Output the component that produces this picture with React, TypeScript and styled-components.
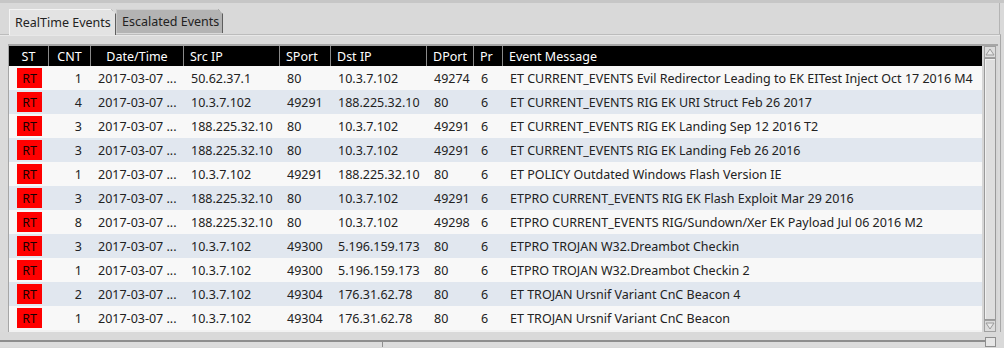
import styled, { createGlobalStyle } from 'styled-components';

const GlobalStyle = createGlobalStyle`
  html, body {
    margin: 0;
    padding: 0;
    background: #d9d9d9;
  }
  * {
    box-sizing: border-box;
  }
`;

const COLS = '40px 42px 93px 96px 51px 96px 47px 29px 1fr';

type Row = {
  cnt: number;
  src: string;
  sport: string;
  dst: string;
  dport: string;
  msg: string;
};

const rows: Row[] = [
  { cnt: 1, src: '50.62.37.1', sport: '80', dst: '10.3.7.102', dport: '49274', msg: 'ET CURRENT_EVENTS Evil Redirector Leading to EK EITest Inject Oct 17 2016 M4' },
  { cnt: 4, src: '10.3.7.102', sport: '49291', dst: '188.225.32.10', dport: '80', msg: 'ET CURRENT_EVENTS RIG EK URI Struct Feb 26 2017' },
  { cnt: 3, src: '188.225.32.10', sport: '80', dst: '10.3.7.102', dport: '49291', msg: 'ET CURRENT_EVENTS RIG EK Landing Sep 12 2016 T2' },
  { cnt: 3, src: '188.225.32.10', sport: '80', dst: '10.3.7.102', dport: '49291', msg: 'ET CURRENT_EVENTS RIG EK Landing Feb 26 2016' },
  { cnt: 1, src: '10.3.7.102', sport: '49291', dst: '188.225.32.10', dport: '80', msg: 'ET POLICY Outdated Windows Flash Version IE' },
  { cnt: 3, src: '188.225.32.10', sport: '80', dst: '10.3.7.102', dport: '49291', msg: 'ETPRO CURRENT_EVENTS RIG EK Flash Exploit Mar 29 2016' },
  { cnt: 8, src: '188.225.32.10', sport: '80', dst: '10.3.7.102', dport: '49298', msg: 'ETPRO CURRENT_EVENTS RIG/Sundown/Xer EK Payload Jul 06 2016 M2' },
  { cnt: 3, src: '10.3.7.102', sport: '49300', dst: '5.196.159.173', dport: '80', msg: 'ETPRO TROJAN W32.Dreambot Checkin' },
  { cnt: 1, src: '10.3.7.102', sport: '49300', dst: '5.196.159.173', dport: '80', msg: 'ETPRO TROJAN W32.Dreambot Checkin 2' },
  { cnt: 2, src: '10.3.7.102', sport: '49304', dst: '176.31.62.78', dport: '80', msg: 'ET TROJAN Ursnif Variant CnC Beacon 4' },
  { cnt: 1, src: '10.3.7.102', sport: '49304', dst: '176.31.62.78', dport: '80', msg: 'ET TROJAN Ursnif Variant CnC Beacon' },
];

const headers: { label: string; align: 'left' | 'center' }[] = [
  { label: 'ST', align: 'center' },
  { label: 'CNT', align: 'center' },
  { label: 'Date/Time', align: 'center' },
  { label: 'Src IP', align: 'left' },
  { label: 'SPort', align: 'left' },
  { label: 'Dst IP', align: 'left' },
  { label: 'DPort', align: 'left' },
  { label: 'Pr', align: 'left' },
  { label: 'Event Message', align: 'left' },
];

const Page = styled.div`
  width: 1004px;
  height: 348px;
  overflow: hidden;
  display: flex;
  flex-direction: column;
  background: #d9d9d9;
  border-top: 3px solid #c6c6c6;
  font-family: 'Noto Sans', 'Open Sans', sans-serif;
  font-size: 12.5px;
  color: #222;
`;

const TabRow = styled.div`
  display: flex;
  align-items: flex-end;
  height: 31px;
  padding-left: 9px;
  margin-right: 4px;
  border-right: 1px solid #b4b4b4;
`;

const Tab = styled.div<{ $active?: boolean }>`
  position: relative;
  display: flex;
  align-items: center;
  width: 107px;
  height: ${(p) => (p.$active ? '26px' : '24px')};
  margin-bottom: ${(p) => (p.$active ? '-1px' : '1px')};
  padding: 0 0 0 5px;
  background: ${(p) => (p.$active ? '#e3e3e3' : '#b3b3b3')};
  border-top: 1px solid ${(p) => (p.$active ? '#f4f4f4' : '#d0d0d0')};
  border-left: 1px solid ${(p) => (p.$active ? '#f4f4f4' : '#c8c8c8')};
  border-right: 1px solid #5e5e5e;
  clip-path: polygon(0 0, calc(100% - 5px) 0, 100% 5px, 100% 100%, 0 100%);
  color: #222;
  white-space: nowrap;

  &::after {
    content: '';
    position: absolute;
    top: -1px;
    right: -1px;
    width: 7px;
    height: 1px;
    background: #5e5e5e;
    transform-origin: right center;
    transform: translateX(-1px) rotate(45deg) translateY(2px);
  }
`;

const Panel = styled.div`
  display: flex;
  flex-direction: column;
  margin-right: 3px;
  padding: 9px 2px 0 8px;
  border-top: 1px solid #bcbcbc;
  border-right: 1px solid #a8a8a8;
  background: #dadada;
  box-shadow: inset 0 1px 0 #e8e8e8;
`;

const Frame = styled.div`
  display: flex;
  height: 288px;
  border-top: 2px solid #a6a6a6;
  border-left: 1px solid #a6a6a6;
  background: #f2f2f2;
`;

const TableArea = styled.div`
  flex: 1;
  display: flex;
  flex-direction: column;
  overflow: hidden;
`;

const GridRow = styled.div<{ $shade?: boolean }>`
  display: grid;
  grid-template-columns: ${COLS};
  height: 24px;
  background: ${(p) => (p.$shade ? '#e1e7ef' : '#f8f8f8')};
`;

const HeaderRow = styled(GridRow)`
  height: 20px;
  background: #000;
`;

const HeadCell = styled.div<{ $align: 'left' | 'center' }>`
  display: flex;
  align-items: center;
  justify-content: ${(p) => (p.$align === 'center' ? 'center' : 'flex-start')};
  padding-left: ${(p) => (p.$align === 'center' ? '0' : '6px')};
  color: #fff;
  border-right: 1px solid #8a8a8a;
  white-space: nowrap;

  &:last-child {
    border-right: none;
  }
`;

const Cell = styled.div<{ $right?: boolean }>`
  display: flex;
  align-items: center;
  justify-content: ${(p) => (p.$right ? 'flex-end' : 'flex-start')};
  padding: ${(p) => (p.$right ? '0 9px 0 0' : '0 0 0 7px')};
  white-space: nowrap;
  overflow: hidden;
`;

const StatusCell = styled.div`
  display: flex;
  align-items: center;
  padding-left: 8px;
`;

const Badge = styled.div`
  width: 25px;
  height: 20px;
  display: flex;
  align-items: center;
  justify-content: center;
  background: #ff0000;
  color: #1a0000;
`;

const Scrollbar = styled.div`
  width: 16px;
  display: flex;
  flex-direction: column;
  padding: 0 2px 0 2px;
  background: #d6d6d6;
`;

const ArrowBox = styled.div`
  height: 12px;
  display: flex;
  align-items: center;
  justify-content: center;
  background: #dcdcdc;
  border: 1px solid #a0a0a0;
`;

const Thumb = styled.div`
  flex: 1;
  border: 1px solid #9a9a9a;
  background: #dedede;
  box-shadow: inset 1px 1px 0 #f0f0f0;
`;

const BottomBar = styled.div`
  display: flex;
  align-items: flex-end;
  height: 15px;
`;

const BottomSegment = styled.div<{ $width?: number }>`
  height: 7px;
  flex: ${(p) => (p.$width ? `0 0 ${p.$width}px` : '1')};
  border-top: 2px solid #8e8e8e;
  border-right: ${(p) => (p.$width ? '1px solid #8e8e8e' : 'none')};
  background: #dcdcdc;
`;

const Grip = styled.div`
  width: 11px;
  height: 10px;
  margin: 0 8px 0 0;
  border: 1px solid #8e8e8e;
  background: #e6e6e6;
  align-self: flex-end;
`;

const Arrow = ({ up }: { up?: boolean }) => (
  <svg width="10" height="8" viewBox="0 0 10 8">
    <path
      d={up ? 'M1 7 L5 1 L9 7 Z' : 'M1 1 L5 7 L9 1 Z'}
      fill="#e8e8e8"
      stroke="#9a9a9a"
      strokeWidth="1"
    />
  </svg>
);

const App = () => {
  return (
    <>
      <GlobalStyle />
      <Page>
        <TabRow>
          <Tab $active>RealTime Events</Tab>
          <Tab>Escalated Events</Tab>
        </TabRow>
        <Panel>
          <Frame>
            <TableArea>
              <HeaderRow>
                {headers.map((h) => (
                  <HeadCell key={h.label} $align={h.align}>
                    {h.label}
                  </HeadCell>
                ))}
              </HeaderRow>
              {rows.map((r, i) => (
                <GridRow key={i} $shade={i % 2 === 1}>
                  <StatusCell>
                    <Badge>RT</Badge>
                  </StatusCell>
                  <Cell $right>{r.cnt}</Cell>
                  <Cell>2017-03-07 ...</Cell>
                  <Cell>{r.src}</Cell>
                  <Cell>{r.sport}</Cell>
                  <Cell>{r.dst}</Cell>
                  <Cell>{r.dport}</Cell>
                  <Cell>6</Cell>
                  <Cell>{r.msg}</Cell>
                </GridRow>
              ))}
            </TableArea>
            <Scrollbar>
              <ArrowBox>
                <Arrow up />
              </ArrowBox>
              <Thumb />
              <ArrowBox>
                <Arrow />
              </ArrowBox>
            </Scrollbar>
          </Frame>
        </Panel>
        <BottomBar>
          <BottomSegment $width={383} />
          <BottomSegment />
          <Grip />
        </BottomBar>
      </Page>
    </>
  );
};

export default App;
